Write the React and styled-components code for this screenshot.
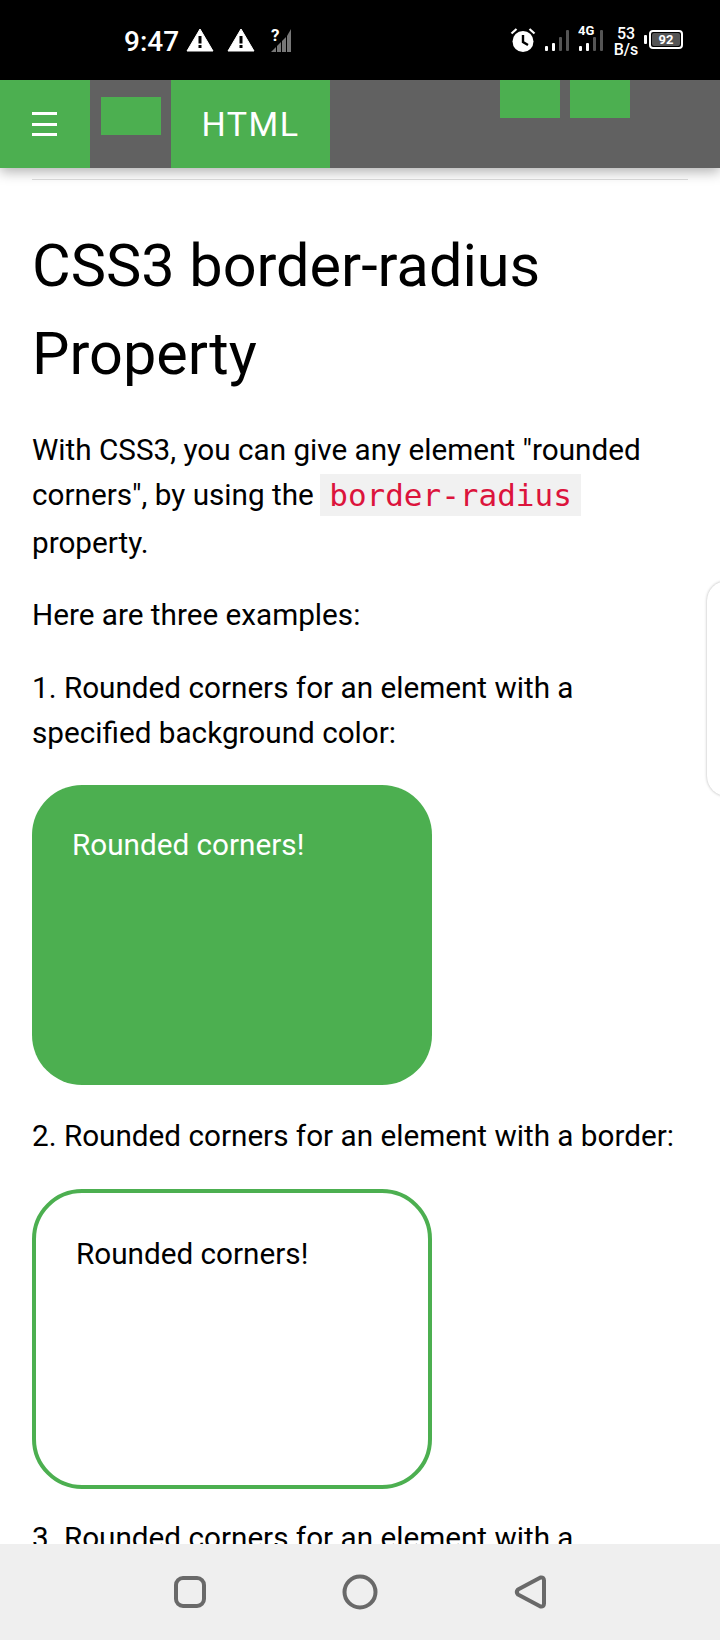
import React from "react";
import styled, { createGlobalStyle } from "styled-components";

const Global = createGlobalStyle`
  html, body {
    margin: 0;
    padding: 0;
    background: #fff;
  }
  * {
    box-sizing: border-box;
  }
`;

const Page = styled.div`
  position: relative;
  width: 720px;
  height: 1640px;
  display: flex;
  flex-direction: column;
  overflow: hidden;
  font-family: Roboto, "Liberation Sans", sans-serif;
  color: #000;
  background: #fff;
`;

const StatusBar = styled.div`
  height: 80px;
  flex: none;
  background: #000;
  color: #fff;
  display: flex;
  align-items: flex-start;
  justify-content: space-between;
  padding: 25px 37px 0 124px;
`;

const StatusGroup = styled.div`
  display: flex;
  align-items: flex-start;
`;

const Clock = styled.span`
  font-size: 28px;
  line-height: 28px;
  font-weight: 500;
  margin-right: 7px;
  margin-top: 3px;
`;

const Speed = styled.span`
  font-size: 16px;
  line-height: 16px;
  font-weight: 500;
  text-align: center;
  width: 26px;
  margin: 1px 5px 0 1px;
`;

const Battery = styled.div`
  width: 34px;
  height: 19px;
  margin-top: 5px;
  border: 2px solid #fff;
  border-radius: 4px;
  padding: 1px;
  display: flex;
`;

const BatteryLevel = styled.span`
  flex: 1;
  background: #555;
  border-radius: 2px;
  font-size: 13px;
  line-height: 13px;
  font-weight: 700;
  text-align: center;
`;

const BatteryCap = styled.span`
  width: 3px;
  height: 9px;
  margin: 10px 2px 0 0;
  background: #fff;
  border-radius: 1px;
`;

const Header = styled.header`
  height: 88px;
  flex: none;
  display: flex;
  background: #616161;
  box-shadow: 0 4px 12px rgba(0, 0, 0, 0.3);
  position: relative;
  z-index: 2;
`;

const MenuButton = styled.div`
  width: 90px;
  background: #4caf50;
  display: flex;
  align-items: center;
  justify-content: center;
`;

const Burger = styled.div`
  width: 25px;
  display: flex;
  flex-direction: column;
  gap: 7.5px;
  margin-right: 1px;

  span {
    height: 3px;
    background: #fff;
  }
`;

const Filler = styled.div`
  width: 60px;
  height: 38px;
  background: #4caf50;
  flex: none;
  margin: ${({ $top }) => $top}px ${({ $right }) => $right}px 0
    ${({ $left }) => $left}px;
`;

const HtmlTab = styled.div`
  width: 159px;
  background: #4caf50;
  color: #fff;
  font-size: 34px;
  letter-spacing: 1.5px;
  display: flex;
  align-items: center;
  justify-content: center;
`;

const Content = styled.main`
  flex: 1;
  min-height: 0;
  overflow: hidden;
  padding: 11px 32px 0;
`;

const Rule = styled.hr`
  height: 1px;
  margin: 0;
  border: 0;
  background: #ddd;
`;

const Title = styled.h1`
  margin: 42px 0 0;
  font-size: 59.4px;
  line-height: 88px;
  font-weight: 400;
`;

const Para = styled.p`
  margin: ${({ $top = 27 }) => $top}px 0 0;
  font-size: 29.7px;
  line-height: 45px;
`;

const Code = styled.code`
  font-family: "DejaVu Sans Mono", "Liberation Mono", monospace;
  font-size: 31px;
  color: #dc143c;
  background: #f1f1f1;
  padding: 3px 9px;
  margin-left: -1px;
  vertical-align: -3px;
  position: relative;
  top: -2px;
`;

const FilledBox = styled.div`
  width: 400px;
  height: 300px;
  margin-top: 30px;
  padding: 37px 40px;
  background: #4caf50;
  color: #fff;
  border-radius: 50px;
  font-size: 29.7px;
  line-height: 45px;
`;

const OutlinedBox = styled.div`
  width: 400px;
  height: 300px;
  margin-top: 31px;
  padding: 38px 40px;
  border: 4px solid #4caf50;
  border-radius: 50px;
  font-size: 29.7px;
  line-height: 45px;
`;

const SideHandle = styled.div`
  position: absolute;
  top: 581px;
  left: 707px;
  width: 40px;
  height: 215px;
  background: #fff;
  border-radius: 24px;
  box-shadow: 0 0 3px rgba(0, 0, 0, 0.3);
  z-index: 1;
`;

const NavBar = styled.nav`
  height: 96px;
  flex: none;
  background: #efefef;
  display: flex;
  align-items: center;
  justify-content: center;
  gap: 136px;
  position: relative;
  z-index: 2;
`;

const AlertIcon = ({ ml = 0 }) => (
  <svg width="28" height="24" viewBox="0 0 28 24" style={{ marginLeft: ml, marginTop: 3 }}>
    <path d="M14 1 L27 23 H1 Z" fill="#fff" stroke="#fff" strokeLinejoin="round" />
    <rect x="12.5" y="8" width="3" height="7.5" fill="#000" />
    <rect x="12.5" y="17" width="3" height="3" fill="#000" />
  </svg>
);

const NoSimIcon = () => (
  <svg width="24" height="30" viewBox="0 0 24 30" style={{ marginLeft: 15 }}>
    <text x="1" y="16" fontSize="17" fontWeight="700" fill="#fff" fontFamily="Roboto, sans-serif">?</text>
    <path d="M1 27 L6 22 V27 Z" fill="#777" />
    <path d="M7 21 L11 17 V27 H7 Z" fill="#777" />
    <path d="M12 16 L16 12 V27 H12 Z" fill="#777" />
    <path d="M17 11 L21 4 V27 H17 Z" fill="#777" />
  </svg>
);

const AlarmIcon = () => (
  <svg width="26" height="26" viewBox="0 0 26 26" style={{ marginRight: 8, marginTop: 2 }}>
    <circle cx="13" cy="14.5" r="10.5" fill="#fff" />
    <path d="M13 8 V15 L18 18" stroke="#000" strokeWidth="2.4" fill="none" />
    <path d="M1.5 6.5 L6.5 2" stroke="#fff" strokeWidth="2.2" />
    <path d="M24.5 6.5 L19.5 2" stroke="#fff" strokeWidth="2.2" />
  </svg>
);

const SignalIcon = ({ label }) => (
  <svg width="28" height="33" viewBox="0 -3 28 33" style={{ marginRight: 6, marginTop: -3 }}>
    {label && (
      <text x="0" y="10" fontSize="13" fontWeight="700" fill="#fff" fontFamily="Roboto, sans-serif">
        {label}
      </text>
    )}
    <rect x="1" y="21" width="3" height="5" rx="1" fill="#fff" />
    <rect x="8" y="18" width="3" height="8" rx="1" fill="#fff" />
    <rect x="15" y="12" width="3" height="14" rx="1" fill="#555" />
    <rect x="22" y="5" width="3" height="21" rx="1" fill="#555" />
  </svg>
);

const SquareNav = () => (
  <svg width="32" height="32" viewBox="0 0 32 32">
    <rect x="2" y="2" width="28" height="28" rx="7" fill="none" stroke="#696969" strokeWidth="4" />
  </svg>
);

const CircleNav = () => (
  <svg width="36" height="36" viewBox="0 0 36 36">
    <circle cx="18" cy="18" r="15.5" fill="none" stroke="#696969" strokeWidth="4" />
  </svg>
);

const BackNav = () => (
  <svg width="32" height="34" viewBox="0 0 32 34">
    <path
      d="M26.5 2.5 Q30 2 30 5.5 V28.5 Q30 32 26.5 31.5 L4 19.5 Q1.5 17 4 14.5 Z"
      fill="none"
      stroke="#696969"
      strokeWidth="4"
      strokeLinejoin="round"
    />
  </svg>
);

export default function App() {
  return (
    <Page>
      <Global />
      <StatusBar>
        <StatusGroup>
          <Clock>9:47</Clock>
          <AlertIcon />
          <AlertIcon ml={13} />
          <NoSimIcon />
        </StatusGroup>
        <StatusGroup>
          <AlarmIcon />
          <SignalIcon />
          <SignalIcon label="4G" />
          <Speed>
            53
            <br />
            B/s
          </Speed>
          <BatteryCap />
          <Battery>
            <BatteryLevel>92</BatteryLevel>
          </Battery>
        </StatusGroup>
      </StatusBar>
      <Header>
        <MenuButton>
          <Burger>
            <span />
            <span />
            <span />
          </Burger>
        </MenuButton>
        <Filler $top={17} $left={11} $right={10} />
        <HtmlTab>HTML</HtmlTab>
        <Filler $top={0} $left={170} $right={10} />
        <Filler $top={0} $left={0} $right={0} />
      </Header>
      <Content>
        <Rule />
        <Title>CSS3 border-radius Property</Title>
        <Para $top={29}>
          With CSS3, you can give any element "rounded corners", by using the{" "}
          <Code>border-radius</Code> property.
        </Para>
        <Para>Here are three examples:</Para>
        <Para $top={28}>
          1. Rounded corners for an element with a specified background color:
        </Para>
        <FilledBox>Rounded corners!</FilledBox>
        <Para $top={28}>2. Rounded corners for an element with a border:</Para>
        <OutlinedBox>Rounded corners!</OutlinedBox>
        <Para $top={26}>3. Rounded corners for an element with a</Para>
      </Content>
      <SideHandle />
      <NavBar>
        <SquareNav />
        <CircleNav />
        <BackNav />
      </NavBar>
    </Page>
  );
}
